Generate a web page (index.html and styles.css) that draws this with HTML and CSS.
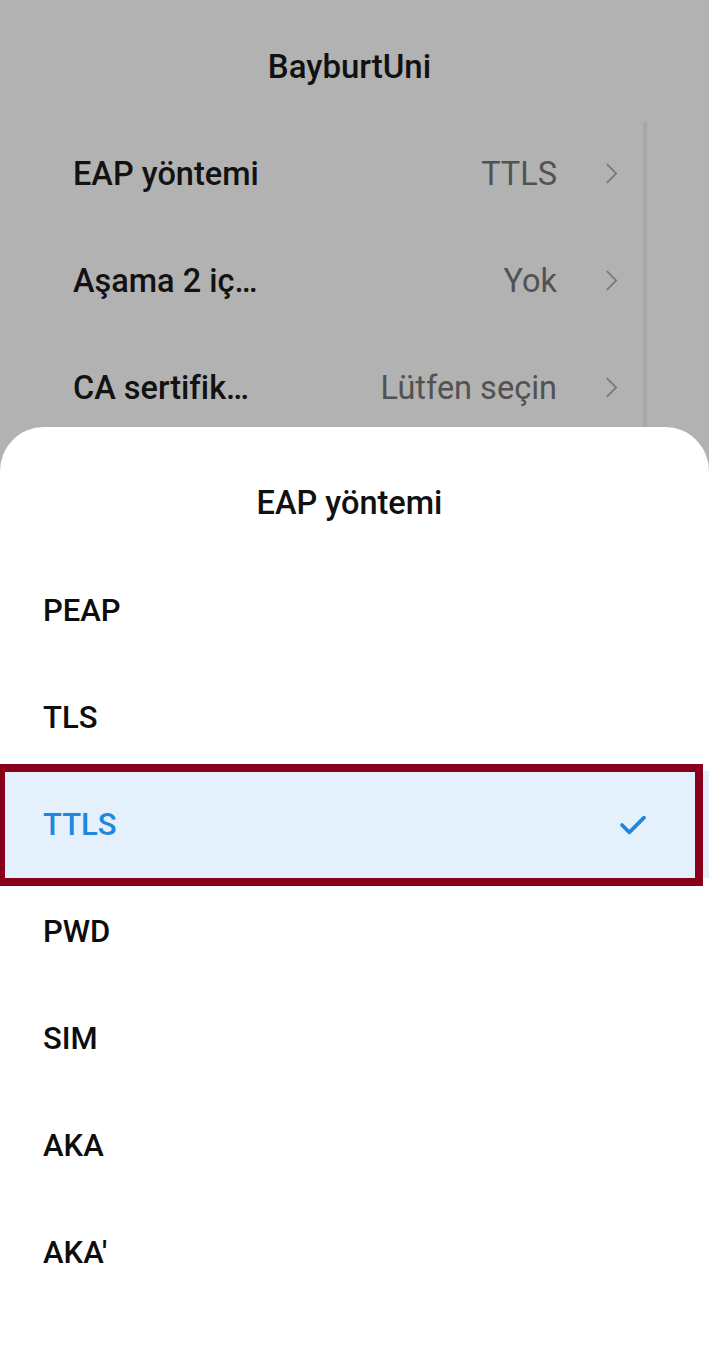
FILE: index.html
```html
<!DOCTYPE html>
<html lang="tr">
<head>
    <meta charset="UTF-8">
    <meta name="viewport" content="width=device-width, initial-scale=1.0">
    <title>BayburtUni</title>
    <link rel="stylesheet" href="styles.css">
</head>
<body>

    <div class="screen">
        <div class="screen-title">BayburtUni</div>

        <div class="setting">
            <span class="setting-label">EAP yöntemi</span>
            <span class="setting-value">TTLS</span>
            <svg class="chevron" viewBox="0 0 14 24"><path d="M2 2 L12 12 L2 22"/></svg>
        </div>
        <div class="setting">
            <span class="setting-label">Aşama 2 iç…</span>
            <span class="setting-value">Yok</span>
            <svg class="chevron" viewBox="0 0 14 24"><path d="M2 2 L12 12 L2 22"/></svg>
        </div>
        <div class="setting">
            <span class="setting-label">CA sertifik…</span>
            <span class="setting-value">Lütfen seçin</span>
            <svg class="chevron" viewBox="0 0 14 24"><path d="M2 2 L12 12 L2 22"/></svg>
        </div>

        <div class="scrollbar"></div>
    </div>

    <div class="sheet">
        <div class="sheet-title">EAP yöntemi</div>
        <ul class="options">
            <li class="option">PEAP</li>
            <li class="option">TLS</li>
            <li class="option selected">
                <span>TTLS</span>
                <svg class="check" viewBox="0 0 30 24"><path d="M3 12 L11 20 L27 4"/></svg>
            </li>
            <li class="option">PWD</li>
            <li class="option">SIM</li>
            <li class="option">AKA</li>
            <li class="option">AKA'</li>
        </ul>
    </div>

</body>
</html>
```

FILE: styles.css
```css
/* Base */
body {
    margin: 0;
    font-family: Roboto, "Noto Sans", sans-serif;
    background: #b2b2b2;
    width: 709px;
    min-height: 1359px;
    display: flex;
    flex-direction: column;
}

/* --- Dimmed settings screen behind the sheet --- */
.screen {
    position: relative;
    height: 427px;
    overflow: hidden;
}
.screen-title {
    height: 120px;
    box-sizing: border-box;
    padding: 47px 10px 0 0;
    line-height: 40px;
    text-align: center;
    font-size: 33px;
    font-weight: 500;
    color: #111;
}
.setting {
    display: flex;
    align-items: center;
    height: 107px;
    padding: 0 91px 0 73px;
    font-size: 32.5px;
}
.setting-label {
    flex: 1;
    color: #121212;
    font-weight: 500;
}
.setting-value {
    color: #525252;
    margin-right: 48px;
}
.chevron {
    width: 13px;
    height: 23px;
    fill: none;
    stroke: #7a7a7a;
    stroke-width: 2;
}
.scrollbar {
    position: absolute;
    left: 643px;
    top: 122px;
    bottom: 0;
    width: 4px;
    background: #a7a7a7;
}

/* --- Bottom sheet --- */
.sheet {
    flex: 1;
    background: #fff;
    border-radius: 44px 44px 0 0;
}
.sheet-title {
    padding: 56px 10px 34px 0;
    line-height: 40px;
    text-align: center;
    font-size: 32.5px;
    font-weight: 500;
    color: #111;
}
.options {
    list-style: none;
    margin: 0;
    padding: 0;
}
.option {
    display: flex;
    align-items: center;
    justify-content: space-between;
    height: 107px;
    padding: 0 62px 0 43px;
    font-size: 31px;
    font-weight: 500;
    color: #0d0d0d;
}
.option.selected {
    position: relative;
    background: #e4f1fc;
    color: #1f87df;
}
/* red highlight frame drawn over the selected row */
.option.selected::after {
    content: "";
    position: absolute;
    left: -3px;
    right: 6px;
    top: -7px;
    bottom: -8px;
    border: 8px solid #88001b;
}
.check {
    width: 28px;
    height: 22px;
    fill: none;
    stroke: #1f87df;
    stroke-width: 4;
    stroke-linecap: round;
    stroke-linejoin: round;
}
```
